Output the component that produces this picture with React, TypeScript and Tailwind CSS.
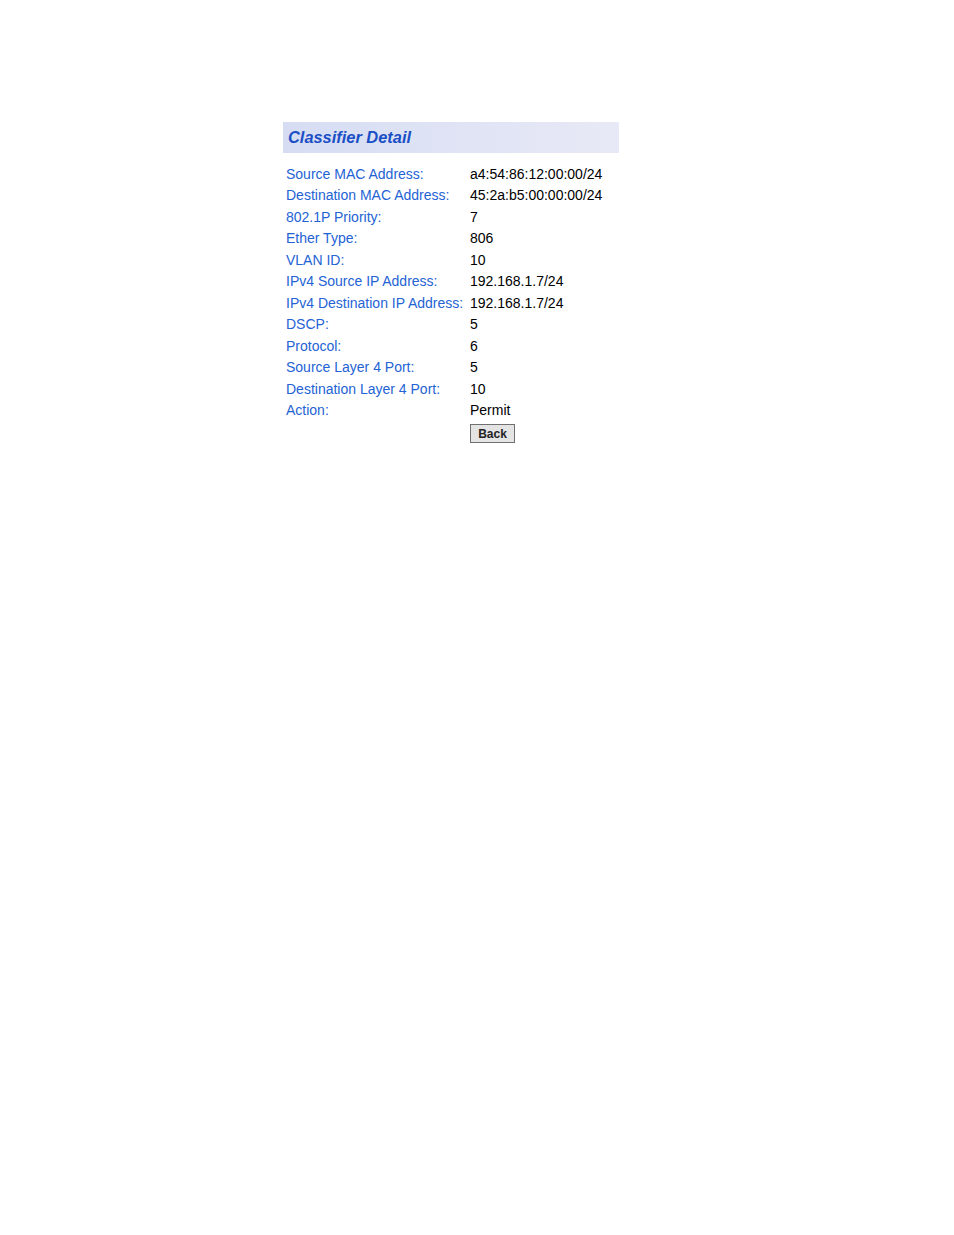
import React from "react";

const rows: [string, string][] = [
  ["Source MAC Address:", "a4:54:86:12:00:00/24"],
  ["Destination MAC Address:", "45:2a:b5:00:00:00/24"],
  ["802.1P Priority:", "7"],
  ["Ether Type:", "806"],
  ["VLAN ID:", "10"],
  ["IPv4 Source IP Address:", "192.168.1.7/24"],
  ["IPv4 Destination IP Address:", "192.168.1.7/24"],
  ["DSCP:", "5"],
  ["Protocol:", "6"],
  ["Source Layer 4 Port:", "5"],
  ["Destination Layer 4 Port:", "10"],
  ["Action:", "Permit"],
];

export default function App() {
  return (
    <div
      className="w-[954px] h-[1235px] bg-white"
      style={{ fontFamily: '"Liberation Sans", Arial, sans-serif' }}
    >
      <div className="pt-[122px] pl-[283px]">
        <div className="w-[336px]">
          <div className="h-[31px] flex items-center pl-[5px] bg-gradient-to-r from-[#d6ddf3] to-[#e8e9f6]">
            <span className="text-[16.4px] font-bold italic text-[#1a4fc6] leading-none">
              Classifier Detail
            </span>
          </div>
          <div className="pt-[10px] pl-[3px]">
            {rows.map(([k, v]) => (
              <div key={k} className="flex h-[21.5px] items-center text-[14px] leading-none">
                <div className="w-[184px] text-[#2463d4] whitespace-nowrap">{k}</div>
                <div className="text-black whitespace-nowrap">{v}</div>
              </div>
            ))}
            <div className="flex pt-[3px]">
              <div className="w-[184px]" />
              <button className="h-[19px] w-[45px] border border-[#707070] bg-[#e4e4e4] text-[12px] font-bold text-[#222] leading-none flex items-center justify-center">
                Back
              </button>
            </div>
          </div>
        </div>
      </div>
    </div>
  );
}
